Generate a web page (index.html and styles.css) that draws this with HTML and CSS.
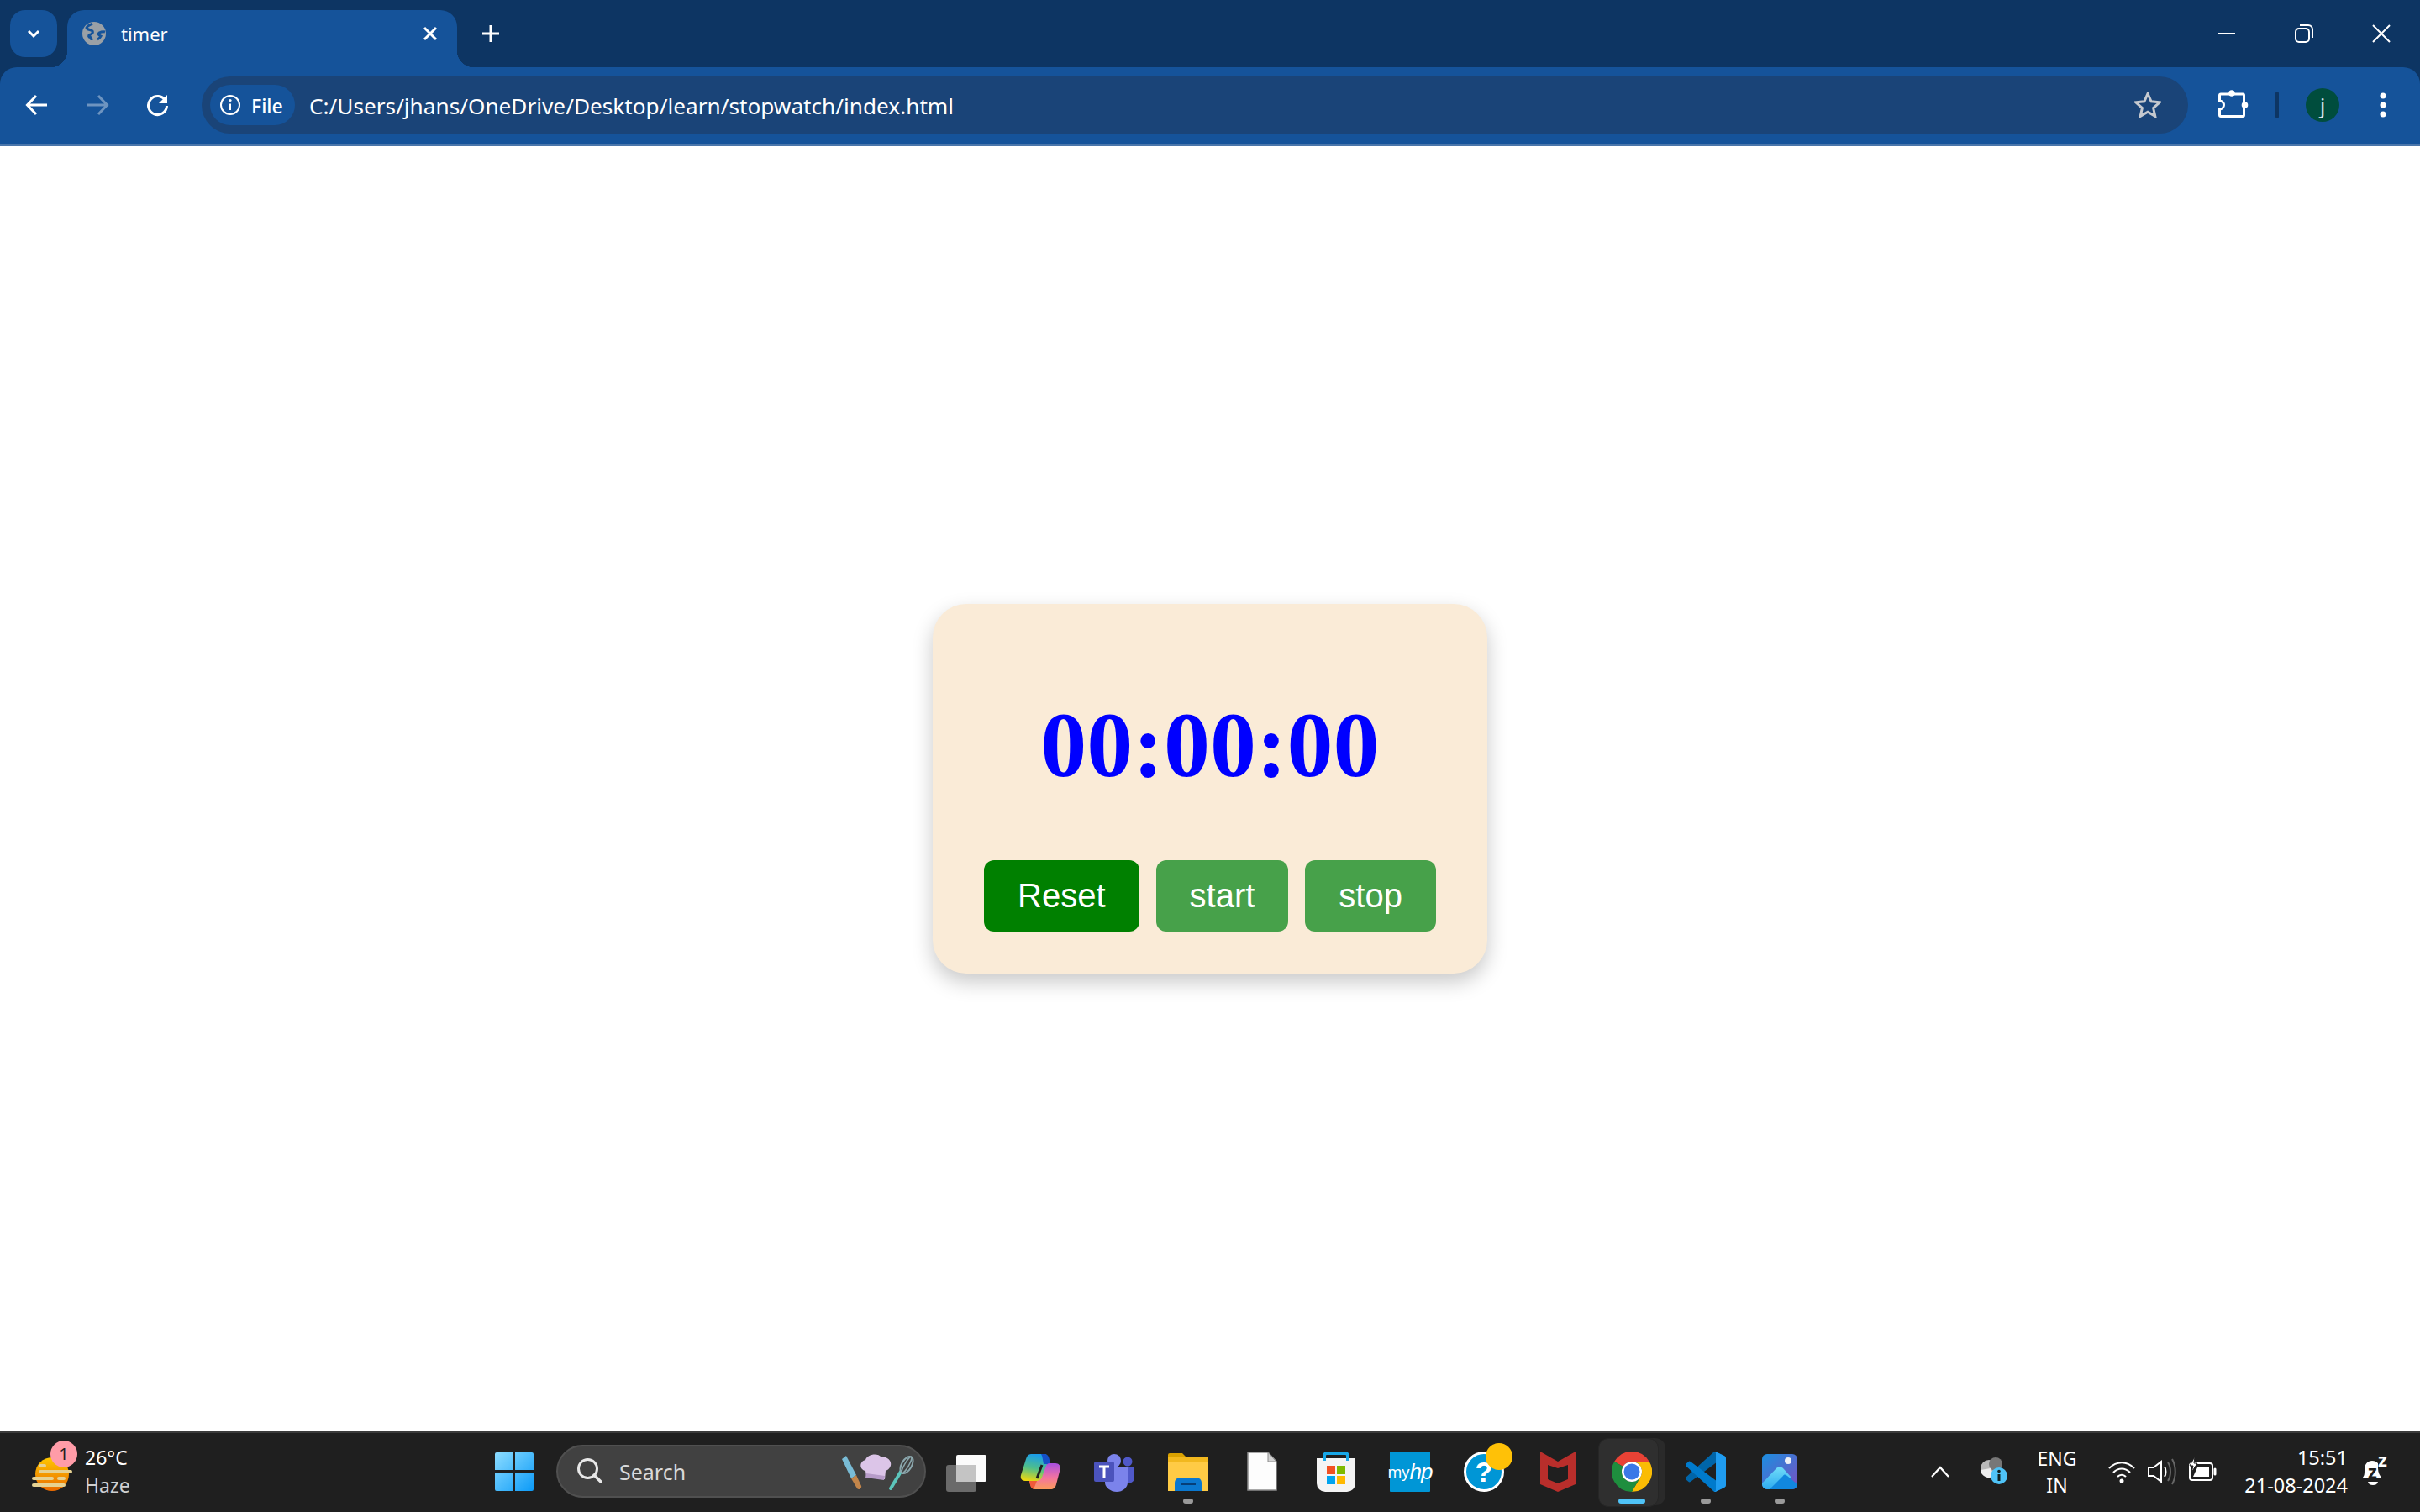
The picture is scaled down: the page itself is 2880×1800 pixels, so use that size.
FILE: index.html
```html
<!DOCTYPE html>
<html lang="en">
<head>
<meta charset="utf-8">
<title>timer</title>
<link rel="stylesheet" href="styles.css">
</head>
<body>
<header class="tabstrip">
  <div class="tabsearch">
    <svg class="ic24" viewBox="0 0 24 24"><path d="M6 9l6 6 6-6" class="st-w3"/></svg>
  </div>
  <div class="tab">
    <svg class="favicon" viewBox="0 0 28 28"><circle cx="14" cy="14" r="14" fill="#9aa0a6"/><path d="M12 2C9 4 6 4 5 7c1 3 5 2 7 4 1 2 0 3-2 4-2 0-3 2-2 3 2 0 3 2 3 4M27 12c-3-1-5 0-7 1-2 2 0 3 2 4-1 2-2 3-4 4" fill="none" stroke="#15539a" stroke-width="3"/></svg>
    <span class="tabtitle">timer</span>
    <svg class="ic24 tabclose" viewBox="0 0 24 24"><path d="M5 5l14 14M19 5L5 19" class="st-w3"/></svg>
  </div>
  <div class="newtab">
    <svg class="ic24" viewBox="0 0 24 24"><path d="M12 2v20M2 12h20" class="st-w3"/></svg>
  </div>
  <div class="winctl">
    <div class="wincell"><svg class="ic24" viewBox="0 0 24 24"><path d="M2 12h20" class="st-w2"/></svg></div>
    <div class="wincell"><svg class="ic24" viewBox="0 0 24 24"><rect x="2" y="6" width="16" height="16" rx="4" class="st-w2"/><path d="M7 2h10a5 5 0 0 1 5 5v10" class="st-w2"/></svg></div>
    <div class="wincell"><svg class="ic24" viewBox="0 0 24 24"><path d="M2 2l20 20M22 2L2 22" class="st-w2"/></svg></div>
  </div>
</header>

<nav class="toolbar">
  <div class="navcell"><svg class="ic28" viewBox="0 0 28 28"><path d="M26 14H3M13 3L2.500 14 13 25" class="st-w3"/></svg></div>
  <div class="navcell"><svg class="ic28 faded" viewBox="0 0 28 28"><path d="M2 14h23M15 3l10.500 11L15 25" class="st-w3"/></svg></div>
  <div class="navcell"><svg class="ic28" viewBox="0 0 28 28"><path d="M23 9a11 11 0 1 0 1.500 6" class="st-w3"/><path d="M25 2v10H15z" fill="#fff"/></svg></div>
  <div class="omnibox">
    <div class="chip">
      <svg class="ic26" viewBox="0 0 26 26"><circle cx="13" cy="13" r="11" class="st-w2"/><path d="M13 11.500v7.500" class="st-w2"/><circle cx="13" cy="7.500" r="1.600" fill="#fff"/></svg>
      <span class="chiptext">File</span>
    </div>
    <span class="url">C:/Users/jhans/OneDrive/Desktop/learn/stopwatch/index.html</span>
    <svg class="star" viewBox="0 0 32 32"><path d="M16 2.500l4.100 9.300 10.100 1-7.600 6.700 2.200 9.900-8.800-5.200-8.800 5.200 2.200-9.900-7.600-6.700 10.100-1z" fill="none" stroke="#c5c9cf" stroke-width="3"/></svg>
  </div>
  <div class="tbright">
    <svg class="puzzle" viewBox="0 0 40 40"><path d="M6 7h26a1.500 1.500 0 0 1 1.500 1.500V32a1.500 1.500 0 0 1-1.500 1.500H6A1.500 1.500 0 0 1 4.500 32v-7a4.800 4.800 0 0 0 0-10V8.500A1.500 1.500 0 0 1 6 7z" class="st-w3"/><circle cx="19" cy="6" r="3.800" fill="#fff"/><circle cx="34.500" cy="20" r="3.800" fill="#fff"/></svg>
    <div class="tbsep"></div>
    <div class="avatar">j</div>
    <svg class="dots" viewBox="0 0 40 40"><circle cx="20" cy="9" r="3.500" fill="#fff"/><circle cx="20" cy="20" r="3.500" fill="#fff"/><circle cx="20" cy="31" r="3.500" fill="#fff"/></svg>
  </div>
</nav>

<main class="page">
  <section class="card">
    <div class="time">00:00:00</div>
    <div class="actions">
      <button class="btn btn-reset">Reset</button>
      <button class="btn btn-soft">start</button>
      <button class="btn btn-soft">stop</button>
    </div>
  </section>
</main>

<footer class="taskbar">
  <div class="weather">
    <div class="wxicon">
      <svg class="wxsvg" viewBox="0 0 48 40">
        <defs><linearGradient id="sun" x1="0" y1="0" x2="0" y2="1"><stop offset="0" stop-color="#ffc800"/><stop offset="1" stop-color="#ea6a00"/></linearGradient></defs>
        <ellipse cx="24" cy="20" rx="20" ry="20" fill="url(#sun)"/>
        <g fill="#e6d293"><rect x="8" y="8" width="9" height="4" rx="2"/><rect x="8" y="15" width="40" height="4" rx="2"/><rect x="0" y="23" width="26" height="4" rx="2"/><rect x="30" y="23" width="10" height="4" rx="2"/><rect x="0" y="31" width="40" height="4" rx="2"/></g>
      </svg>
      <span class="wxbadge">1</span>
    </div>
    <div class="wxtext"><span class="wxtemp">26°C</span><span class="wxdesc">Haze</span></div>
  </div>

  <div class="center">
    <div class="cell">
      <svg class="winlogo" viewBox="0 0 46 46">
        <defs><linearGradient id="wl" x1="0" y1="0" x2="1" y2="1"><stop offset="0" stop-color="#8cdcff"/><stop offset="1" stop-color="#0c9bf8"/></linearGradient></defs>
        <path d="M2 0h20v21H0V2a2 2 0 0 1 2-2zM24 0h20a2 2 0 0 1 2 2v19H24zM0 24h22v22H2a2 2 0 0 1-2-2zM24 24h22v20a2 2 0 0 1-2 2H24z" fill="url(#wl)"/>
      </svg>
    </div>
    <div class="search">
      <svg class="searchic" viewBox="0 0 34 34"><circle cx="13.500" cy="13.500" r="11" fill="none" stroke="#e8e8e8" stroke-width="3"/><path d="M21 21l8 8" stroke="#e8e8e8" stroke-width="3.500" stroke-linecap="round"/></svg>
      <span class="searchtext">Search</span>
      <svg class="chef" viewBox="0 0 90 46">
        <path d="M2 8l5-4 12 23-6 4z" fill="#79bcd6"/>
        <path d="M13 31l6-4 6 13a3 3 0 0 1-5 3z" fill="#c3854a"/>
        <path d="M30 22c-7-1-8-11 0-13 2-7 15-9 19-3 8-2 14 6 10 12-1 2-3 3-5 4l-1 10-22-3z" fill="#dcc5e8"/>
        <path d="M31 25l22 3-1 5-22-3z" fill="#b79cc9"/>
        <path d="M60 43l12-20" stroke="#5cc5bb" stroke-width="4" stroke-linecap="round"/>
        <ellipse cx="79" cy="15" rx="6" ry="11" transform="rotate(30 79 15)" fill="none" stroke="#8ba7ad" stroke-width="2"/>
        <ellipse cx="79" cy="15" rx="2.500" ry="11" transform="rotate(30 79 15)" fill="none" stroke="#8ba7ad" stroke-width="1.500"/>
      </svg>
    </div>
    <div class="cell">
      <svg class="appic" viewBox="0 0 48 48"><rect x="0" y="16" width="36" height="32" rx="3" fill="#6a6a6a"/><rect x="12" y="4" width="36" height="32" rx="2" fill="#fbfbfb"/><rect x="12" y="16" width="24" height="20" fill="#c4c4c4"/></svg>
    </div>
    <div class="cell">
      <svg class="appic" viewBox="0 0 48 48">
        <defs>
          <linearGradient id="cpl" x1="0.400" y1="0" x2="0.200" y2="1"><stop offset="0" stop-color="#1b9de8"/><stop offset=".5" stop-color="#4fbf8a"/><stop offset="1" stop-color="#f5d90a"/></linearGradient>
          <linearGradient id="cpr" x1="0.500" y1="0" x2="0.500" y2="1"><stop offset="0" stop-color="#a94fe0"/><stop offset=".55" stop-color="#f274a0"/><stop offset="1" stop-color="#fb9b5a"/></linearGradient>
        </defs>
        <path d="M13 3h16c3 0 5 3 5 7l-6 20c-1 3-3 5-6 5H6c-4 0-6-3-5-7L7 9c1-4 3-6 6-6z" fill="url(#cpl)"/>
        <path d="M25 3h4c3 0 5 2 6 7l1 5H28c-1-4-1-9-3-12z" fill="#1550c8"/>
        <path d="M36 14h6c4 0 6 3 6 6l-5 19c-1 4-3 6-7 6H18c-3 0-5-2-6-6l-1-4h9c4 0 6-3 7-7l4-11c1-2 2-3 4-3z" fill="url(#cpr)"/>
        <path d="M11 35h9l-4 10c-3-1-4-4-5-10z" fill="#f05a3a"/>
        <path d="M26 16l-6 16" stroke="#1f1f1f" stroke-width="3"/>
      </svg>
    </div>
    <div class="cell">
      <svg class="appic" viewBox="0 0 48 48">
        <circle cx="24" cy="11" r="8" fill="#7b83eb"/><circle cx="40" cy="12" r="5.500" fill="#5059c9"/>
        <path d="M37 19h11v12c0 4-3 7-8 7h-3z" fill="#5059c9"/>
        <path d="M13 19h27v18c0 6-6 11-13 11s-14-5-14-11z" fill="#7b83eb"/>
        <rect x="0" y="12" width="24" height="24" rx="2" fill="#4b53bc"/>
        <path d="M6 18h12M12 18v13" stroke="#fff" stroke-width="3"/>
      </svg>
    </div>
    <div class="cell">
      <svg class="appic" viewBox="0 0 48 48">
        <path d="M0 4a2 2 0 0 1 2-2h15l5 5h-22z" fill="#d9a100"/>
        <path d="M0 10h48v37H0z" fill="#ffcb45"/>
        <path d="M0 7h48v5H0z" fill="#f2b81e"/>
        <path d="M8 47V37a6 6 0 0 1 6-6h20a6 6 0 0 1 6 6v10z" fill="#0b78cf"/>
        <path d="M15 39h18" stroke="#063f78" stroke-width="2"/>
      </svg>
      <span class="run"></span>
    </div>
    <div class="cell">
      <svg class="appic" viewBox="0 0 48 48"><path d="M7 1h24l10 11v34H7z" fill="#fdfdfd" stroke="#8d8d8d" stroke-width="1.500"/><path d="M31 1v11h10z" fill="#d3d3d3" stroke="#8d8d8d" stroke-width="1"/></svg>
    </div>
    <div class="cell">
      <svg class="appic" viewBox="0 0 48 48">
        <path d="M1 8h46v30a10 10 0 0 1-10 10H11A10 10 0 0 1 1 38z" fill="#f4f4f4"/>
        <path d="M10 11V5a3 3 0 0 1 3-3h22a3 3 0 0 1 3 3v6" fill="none" stroke="#18a8e8" stroke-width="4"/>
        <rect x="13" y="17" width="10" height="10" fill="#f25022"/><rect x="25" y="17" width="10" height="10" fill="#7fba00"/>
        <rect x="13" y="29" width="10" height="10" fill="#00a4ef"/><rect x="25" y="29" width="10" height="10" fill="#ffb900"/>
      </svg>
    </div>
    <div class="cell">
      <div class="myhp"><span class="myhp-my">my</span><span class="myhp-hp">hp</span></div>
    </div>
    <div class="cell">
      <div class="help">?<span class="helpdot"></span></div>
    </div>
    <div class="cell">
      <svg class="appic" viewBox="0 0 48 48"><path fill-rule="evenodd" d="M3 0l21 12L45 0v39l-21 9-21-9zM12 16l12 4 12-4v17l-12 5-12-5z" fill="#b92e2b"/></svg>
    </div>
    <div class="cell cell-active">
      <svg class="appic appic-chrome" viewBox="0 0 48 48">
        <path d="M3.200 12A24 24 0 0 1 44.800 12H24A12 12 0 0 0 13.600 18z" fill="#e94235"/>
        <path d="M44.800 12A24 24 0 0 1 24 48L34.400 30A12 12 0 0 0 24 12z" fill="#fbbc04"/>
        <path d="M24 48A24 24 0 0 1 3.200 12L13.600 18A12 12 0 0 0 34.400 30z" fill="#1e8e3e"/>
        <circle cx="24" cy="24" r="12" fill="#fff"/><circle cx="24" cy="24" r="9.500" fill="#3b78e7"/>
      </svg>
      <span class="run run-active"></span>
    </div>
    <div class="cell">
      <svg class="appic" viewBox="0 0 100 100">
        <path d="M96.460 10.800 75.860.870a6.230 6.230 0 0 0-7.100 1.200L1.300 63.570a4.170 4.170 0 0 0 0 6.160l5.500 5a4.170 4.170 0 0 0 5.320.240L93.340 14.400a4.130 4.130 0 0 1 6.660 3.300v-.240a6.250 6.250 0 0 0-3.540-5.660z" fill="#0065a9"/>
        <path d="M96.460 89.200 75.860 99.130a6.230 6.230 0 0 1-7.100-1.200L1.300 36.430a4.170 4.170 0 0 1 0-6.160l5.500-5a4.170 4.170 0 0 1 5.320-.240L93.340 85.600a4.130 4.130 0 0 0 6.660-3.300v.240a6.250 6.250 0 0 1-3.540 5.660z" fill="#007acc"/>
        <path d="M75.860 99.130a6.230 6.230 0 0 1-7.100-1.200c2.300 2.300 6.240.670 6.240-2.600V4.670c0-3.270-3.940-4.900-6.240-2.600a6.230 6.230 0 0 1 7.100-1.200l20.600 9.900A6.250 6.250 0 0 1 100 16.400v67.200a6.250 6.250 0 0 1-3.540 5.630z" fill="#1f9cf0"/>
      </svg>
      <span class="run"></span>
    </div>
    <div class="cell">
      <svg class="appic appic-photos" viewBox="0 0 42 42">
        <defs>
          <linearGradient id="ph" x1="0" y1="0" x2="1" y2="1"><stop offset="0" stop-color="#1a8fe0"/><stop offset="1" stop-color="#7a4fc0"/></linearGradient>
          <linearGradient id="ph2" x1="0" y1="0" x2="0" y2="1"><stop offset="0" stop-color="#6fdcf8"/><stop offset="1" stop-color="#2eaaf0"/></linearGradient>
        </defs>
        <rect width="42" height="42" rx="6" fill="url(#ph)"/>
        <circle cx="31" cy="8" r="4" fill="#eef0f6"/>
        <path d="M0 35l17-18c2-2 6-2 8 0l10 11-9 14H6a6 6 0 0 1-6-6z" fill="url(#ph2)"/>
        <path d="M9 42l16-16c1-2 3-2 5 0l12 10a6 6 0 0 1-6 6z" fill="#1187de"/>
      </svg>
      <span class="run"></span>
    </div>
  </div>

  <div class="tray">
    <div class="traycell"><svg class="ic24" viewBox="0 0 24 24"><path d="M2 18L12 7l10 11" fill="none" stroke="#fff" stroke-width="2.200"/></svg></div>
    <div class="traycell">
      <svg class="ic36" viewBox="0 0 36 36"><circle cx="12" cy="14" r="10" fill="#b9b9b9"/><circle cx="20" cy="9" r="8" fill="#777"/><path d="M2 16a10 10 0 0 0 16 7l-4-9z" fill="#eee"/><circle cx="24" cy="23" r="10" fill="#4fc3f7"/><rect x="22.500" y="21" width="3" height="8" fill="#122"/><circle cx="24" cy="17.500" r="1.800" fill="#122"/></svg>
    </div>
    <div class="lang"><span>ENG</span><span>IN</span></div>
    <div class="traycell traycell-sm"><svg class="ic36" viewBox="0 0 36 36"><path d="M3 14c9-9 21-9 30 0M8 19c6-6 14-6 20 0M13 24c3-3 7-3 10 0" fill="none" stroke="#fff" stroke-width="2.200"/><circle cx="18" cy="29" r="2.500" fill="#fff"/></svg></div>
    <div class="traycell traycell-sm"><svg class="ic36" viewBox="0 0 36 36"><path d="M2 13h6l9-7v24l-9-7H2z" fill="none" stroke="#fff" stroke-width="2"/><path d="M21 12c2 3 2 9 0 12" fill="none" stroke="#fff" stroke-width="2"/><path d="M25 7c4 6 4 16 0 22M30 3c5 9 5 21 0 30" fill="none" stroke="#666" stroke-width="2"/></svg></div>
    <div class="traycell traycell-sm"><svg class="ic36" viewBox="0 0 36 36"><rect x="3" y="8" width="27" height="20" rx="3" fill="none" stroke="#fff" stroke-width="2"/><path d="M33 15v6" stroke="#fff" stroke-width="3" stroke-linecap="round"/><path d="M7 24l5-11h14v11z" fill="#fff"/><path d="M9 0L3 11h4l-2 8 7-11H8z" fill="#fff" stroke="#1f1f1f" stroke-width="1"/></svg></div>
    <div class="clock"><span>15:51</span><span>21-08-2024</span></div>
    <div class="bell">
      <svg class="ic36" viewBox="0 0 36 36"><path d="M5 26c3-3 3-5 3-11 0-6 4-10 9-10 3 0 5 1 7 3v6c0 5 2 9 5 12z" fill="#fff"/><path d="M12 30h12c-1 3-3 4-6 4s-5-1-6-4z" fill="#fff"/></svg>
      <span class="bellz">z</span><span class="bellZ">z</span>
    </div>
  </div>
</footer>
</body>
</html>
```

FILE: styles.css
```css
* { box-sizing: border-box; }
html, body { margin: 0; height: 100%; }
body {
  width: 2880px;
  height: 1800px;
  display: flex;
  flex-direction: column;
  background: #0d3563;
  font-family: "Noto Sans", "Open Sans", sans-serif;
  overflow: hidden;
}
svg { display: block; flex: none; }
.st-w3 { fill: none; stroke: #fff; stroke-width: 3; }
.st-w2 { fill: none; stroke: #fff; stroke-width: 2; }
.ic24 { width: 24px; height: 24px; }
.ic26 { width: 26px; height: 26px; }
.ic28 { width: 28px; height: 28px; }
.ic36 { width: 36px; height: 36px; }
.faded { opacity: .38; }

/* tab strip */
.tabstrip {
  height: 80px;
  flex: none;
  display: flex;
  padding: 12px 0 0 12px;
  background: #0d3563;
  color: #fff;
}
.tabsearch {
  width: 56px;
  height: 56px;
  margin-right: 12px;
  border-radius: 18px;
  background: #15539a;
  display: flex;
  align-items: center;
  justify-content: center;
}
.tab {
  position: relative;
  width: 464px;
  height: 68px;
  padding: 0 20px 12px 18px;
  display: flex;
  align-items: center;
  border-radius: 20px 20px 0 0;
  background: #15539a;
}
.tab::before, .tab::after {
  content: "";
  position: absolute;
  bottom: 0;
  width: 20px;
  height: 20px;
}
.tab::before { left: -20px; background: radial-gradient(circle at 0 0, transparent 20px, #15539a 20.500px); }
.tab::after { right: -20px; background: radial-gradient(circle at 100% 0, transparent 20px, #15539a 20.500px); }
.favicon { width: 28px; height: 28px; margin-right: 18px; }
.tabtitle { font-size: 22px; }
.tabclose { margin-left: auto; width: 24px; height: 24px; }
.newtab {
  width: 80px;
  height: 56px;
  display: flex;
  align-items: center;
  justify-content: center;
}
.winctl { margin-left: auto; display: flex; height: 56px; }
.wincell { width: 92px; display: flex; align-items: center; justify-content: center; }

/* toolbar */
.toolbar {
  height: 94px;
  flex: none;
  display: flex;
  align-items: center;
  padding: 0 0 2px 8px;
  background: #15539a;
  border-bottom: 2px solid #4a76ab;
  border-radius: 20px 20px 0 0;
}
.navcell { width: 72px; height: 72px; display: flex; align-items: center; justify-content: center; }
.omnibox {
  flex: 1;
  height: 68px;
  margin-left: 16px;
  padding: 0 32px 0 10px;
  border-radius: 34px;
  background: #1a4478;
  display: flex;
  align-items: center;
  color: #fff;
}
.chip {
  width: 101px;
  height: 48px;
  padding-left: 11px;
  border-radius: 24px;
  background: #15539a;
  display: flex;
  align-items: center;
  gap: 12px;
}
.chiptext { font-size: 23px; font-weight: 500; padding-top: 1px; }
.url { margin-left: 17px; padding-top: 2px; font-size: 26.200px; white-space: nowrap; }
.star { margin-left: auto; width: 32px; height: 32px; }
.tbright { width: 276px; flex: none; display: flex; align-items: center; padding-left: 33px; }
.puzzle { width: 40px; height: 40px; }
.tbsep { width: 4px; height: 32px; margin-left: 31px; border-radius: 2px; background: #0d3563; }
.avatar {
  width: 40px;
  height: 40px;
  margin-left: 32px;
  border-radius: 50%;
  background: #004d3d;
  color: #e8e8e8;
  font-size: 24px;
  display: flex;
  align-items: center;
  justify-content: center;
}
.dots { width: 40px; height: 40px; margin-left: 32px; }

/* page */
.page { flex: 1; background: #fff; display: flex; align-items: center; justify-content: center; }
.card {
  width: 660px;
  height: 440px;
  padding-top: 107px;
  border-radius: 40px;
  background: #faebd7;
  box-shadow: 0 10px 24px rgba(0, 0, 0, .22);
  display: flex;
  flex-direction: column;
  align-items: center;
}
.time {
  font: bold 110px/122px "Liberation Serif", serif;
  color: #00f;
  margin-bottom: 76px;
}
.actions { display: flex; gap: 20px; }
.btn {
  height: 85px;
  padding: 0 40px;
  border: 0;
  border-radius: 12px;
  color: #fff;
  font: 40px "Liberation Sans", Arial, sans-serif;
}
.btn-reset { background: #008000; }
.btn-soft { background: #47a14a; }

/* taskbar */
.taskbar {
  height: 96px;
  flex: none;
  display: flex;
  align-items: stretch;
  background: #1f1f1f;
  border-top: 2px solid #3b3b3b;
  color: #fff;
}
.weather { width: 568px; flex: none; display: flex; align-items: center; padding: 0 0 2px 38px; }
.wxicon { position: relative; width: 48px; height: 40px; margin-top: 6px; }
.wxsvg { width: 48px; height: 40px; }
.wxbadge {
  position: absolute;
  left: 22px;
  top: -20px;
  width: 32px;
  height: 32px;
  border-radius: 50%;
  background: #ff9ca8;
  color: #1f1f1f;
  font-size: 20px;
  line-height: 32px;
  text-align: center;
}
.wxtext { margin-left: 15px; display: flex; flex-direction: column; font-size: 23px; line-height: 33px; }
.wxdesc { color: #cfcfcf; }
.center { display: flex; align-items: stretch; }
.cell {
  position: relative;
  width: 88px;
  padding-bottom: 2px;
  display: flex;
  align-items: center;
  justify-content: center;
}
.appic { width: 48px; height: 48px; position: relative; }
.appic-photos { width: 42px; height: 42px; }
.winlogo { width: 46px; height: 46px; }
.run {
  position: absolute;
  left: 38px;
  top: 78px;
  width: 12px;
  height: 6px;
  border-radius: 3px;
  background: #9a9a9a;
}
.run-active { left: 28px; width: 32px; background: #4fc3f7; }
.cell-active::before, .cell-active::after {
  content: "";
  position: absolute;
  top: 6px;
  height: 80px;
  border-radius: 12px;
}
.cell-active::before { left: 24px; width: 60px; background: #2a2a2a; }
.cell-active::after { left: 4px; width: 70px; background: #2f2f2f; border: 1px solid #262626; }
.appic-chrome, .run-active { z-index: 1; }
.search {
  width: 440px;
  height: 63px;
  margin: 14px 4px 0 6px;
  padding: 0 10px 0 22px;
  border-radius: 32px;
  background: #414141;
  border: 2px solid #505050;
  display: flex;
  align-items: center;
}
.searchic { width: 34px; height: 34px; }
.searchtext { margin-left: 17px; font-size: 25px; color: #d8d8d8; }
.chef { width: 90px; height: 46px; margin-left: auto; }
.myhp {
  width: 48px;
  height: 48px;
  background: #0096d6;
  border-radius: 1px;
  display: flex;
  align-items: center;
  justify-content: center;
  font-size: 18px;
  line-height: 1;
  color: #fff;
}
.myhp-hp { font: italic 26px "Liberation Sans", sans-serif; letter-spacing: -1px; }
.help {
  position: relative;
  width: 48px;
  height: 48px;
  border-radius: 50%;
  background: #0096d6;
  border: 3px solid #fff;
  color: #fff;
  font: bold 34px/42px "Liberation Sans", sans-serif;
  text-align: center;
}
.helpdot {
  position: absolute;
  left: 23px;
  top: -13px;
  width: 32px;
  height: 32px;
  border-radius: 50%;
  background: #ffc107;
}
.tray { flex: 1; display: flex; align-items: center; padding: 0 32px 2px 115px; }
.traycell { width: 64px; display: flex; align-items: center; justify-content: center; }
.traycell-sm { width: 48px; }
.lang {
  width: 86px;
  margin-right: 10px;
  display: flex;
  flex-direction: column;
  align-items: center;
  font-size: 23px;
  line-height: 32px;
}
.clock {
  margin-left: auto;
  display: flex;
  flex-direction: column;
  align-items: flex-end;
  font-size: 23.500px;
  line-height: 33px;
}
.bell { position: relative; width: 48px; margin-left: 6px; display: flex; justify-content: center; }
.bellz, .bellZ { position: absolute; font-weight: 700; line-height: 1; }
.bellz { left: 18px; top: 6px; font-size: 22px; color: #1f1f1f; }
.bellZ { left: 30px; top: -8px; font-size: 22px; color: #fff; }
```
